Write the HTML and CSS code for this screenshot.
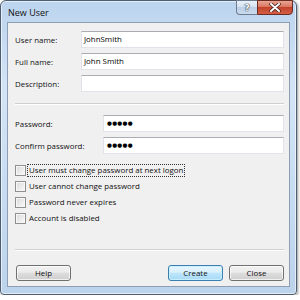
FILE: index.html
```html
<!DOCTYPE html>
<html lang="en">

<head>
    <meta charset="UTF-8">
    <title>New User</title>
    <link rel="stylesheet" href="styles.css">
</head>

<body>
    <div class="window">
        <div class="titlebar">
            <span class="title">New User</span>
            <div class="caption-buttons">
                <span class="cap-btn cap-help">?</span>
                <span class="cap-btn cap-close">
                    <svg width="12" height="9" viewBox="0 0 12 9">
                        <path d="M2 1 L10 8 M10 1 L2 8" stroke="#3a1a14" stroke-width="3.4" stroke-linecap="round" />
                        <path d="M2 1 L10 8 M10 1 L2 8" stroke="#fff" stroke-width="2" stroke-linecap="round" />
                    </svg>
                </span>
            </div>
        </div>
        <div class="client">
            <div class="fields">
                <label>User name:</label>
                <div class="textbox">JohnSmith</div>
                <label>Full name:</label>
                <div class="textbox">John Smith</div>
                <label>Description:</label>
                <div class="textbox"></div>
            </div>

            <div class="separator"></div>

            <div class="fields fields-pw">
                <label>Password:</label>
                <div class="textbox dots">●●●●●</div>
                <label>Confirm password:</label>
                <div class="textbox dots">●●●●●</div>
            </div>

            <div class="options">
                <div class="check-row"><span class="checkbox"></span><span class="check-label focused">User must change password at next logon</span></div>
                <div class="check-row"><span class="checkbox"></span><span class="check-label">User cannot change password</span></div>
                <div class="check-row"><span class="checkbox"></span><span class="check-label">Password never expires</span></div>
                <div class="check-row"><span class="checkbox"></span><span class="check-label">Account is disabled</span></div>
            </div>

            <div class="separator separator-bottom"></div>

            <div class="btn-container">
                <span class="btn">Help</span>
                <div class="btn-group">
                    <span class="btn btn-default">Create</span>
                    <span class="btn">Close</span>
                </div>
            </div>
        </div>
    </div>
</body>

</html>
```

FILE: styles.css
```css
body {
    margin: 0;
    background-color: #fff;
    font-family: "Open Sans", "Liberation Sans", sans-serif;
    font-size: 7.9px;
    color: #111;
}

.window {
    width: 297px;
    height: 295px;
    box-sizing: border-box;
    border: 1px solid #4f5d70;
    border-radius: 6px 6px 4px 4px;
    padding: 0 6px 7px 6px;
    background: linear-gradient(180deg, #bcd4ee 0%, #d3e4f6 30%, #c6dbf1 70%, #bcd3ec 100%);
    box-shadow: 1px 1px 3px rgba(0, 0, 0, 0.4), inset 0 0 0 1px rgba(255, 255, 255, 0.6);
    display: flex;
    flex-direction: column;
}

.titlebar {
    height: 21px;
    display: flex;
    align-items: flex-start;
}

.title {
    margin-left: 1px;
    padding-top: 5px;
    font-size: 9px;
    color: #111;
}

.caption-buttons {
    margin-left: auto;
    margin-right: -3px;
    margin-top: -1px;
    display: flex;
}

.cap-btn {
    height: 15px;
    box-sizing: border-box;
    display: flex;
    align-items: center;
    justify-content: center;
    border: 1px solid #6e7c90;
}

.cap-help {
    width: 21px;
    border-right: none;
    border-radius: 0 0 0 4px;
    background: linear-gradient(180deg, #e9f0f8 0%, #d6e3f1 45%, #bccfe5 50%, #cadbee 100%);
    font-family: "DejaVu Sans", sans-serif;
    font-size: 9px;
    font-weight: bold;
    color: #fff;
    text-shadow: 0 0 1px #2c3b50, 0 0 1px #2c3b50, 0 0 1px #2c3b50;
}

.cap-close {
    width: 36px;
    border-color: #6a2c20;
    border-radius: 0 0 4px 0;
    background: linear-gradient(180deg, #eaa596 0%, #d9765f 45%, #c4432b 50%, #d25e45 100%);
}

.client {
    flex: 1;
    background-color: #f0f0f0;
    border: 1px solid #8d9db3;
    padding: 8px 5px 0 7px;
}

.fields {
    display: grid;
    grid-template-columns: 66px 1fr;
    row-gap: 5px;
    align-items: center;
}

.fields-pw {
    grid-template-columns: 88px 1fr;
}

.textbox {
    height: 17px;
    box-sizing: border-box;
    background-color: #fff;
    border: 1px solid #e2e3ea;
    border-top-color: #abadb3;
    padding: 0 2px;
    line-height: 15px;
    color: #000;
}

.dots {
    font-family: "DejaVu Sans", sans-serif;
    font-size: 5.6px;
    letter-spacing: 0.3px;
    padding-left: 3px;
}

.separator {
    margin: 11px 0 10px;
    border-top: 1px solid #d0d0d0;
    border-bottom: 1px solid #fff;
}

.options {
    margin-top: 8px;
}

.check-row {
    height: 16px;
    display: flex;
    align-items: center;
}

.checkbox {
    width: 11px;
    height: 11px;
    box-sizing: border-box;
    border: 1px solid #8f8f8f;
    background: linear-gradient(135deg, #d8d8d8 0%, #f4f4f4 80%);
    box-shadow: inset 0 0 0 1px #f7f7f7;
}

.check-label {
    margin-left: 1px;
    padding: 0 1px 1px;
    border: 1px solid transparent;
}

.focused {
    border: 1px dotted #333;
}

.separator-bottom {
    margin: 23px 0 14px;
}

.btn-container {
    display: flex;
    justify-content: space-between;
    padding-left: 1px;
}

.btn-group {
    display: flex;
    gap: 6px;
}

.btn {
    width: 55px;
    height: 16px;
    box-sizing: border-box;
    border: 1px solid #707070;
    border-radius: 3px;
    background: linear-gradient(180deg, #f2f2f2 0%, #ebebeb 45%, #dddddd 50%, #cfcfcf 100%);
    box-shadow: inset 0 0 0 1px rgba(255, 255, 255, 0.7);
    display: flex;
    align-items: center;
    justify-content: center;
    color: #111;
}

.btn-default {
    border-color: #3c7fb1;
    background: linear-gradient(180deg, #eaf6fd 0%, #d9f0fc 45%, #bee6fd 50%, #a7d9f5 100%);
    box-shadow: inset 0 0 0 1px rgba(200, 240, 255, 0.9);
}
```
